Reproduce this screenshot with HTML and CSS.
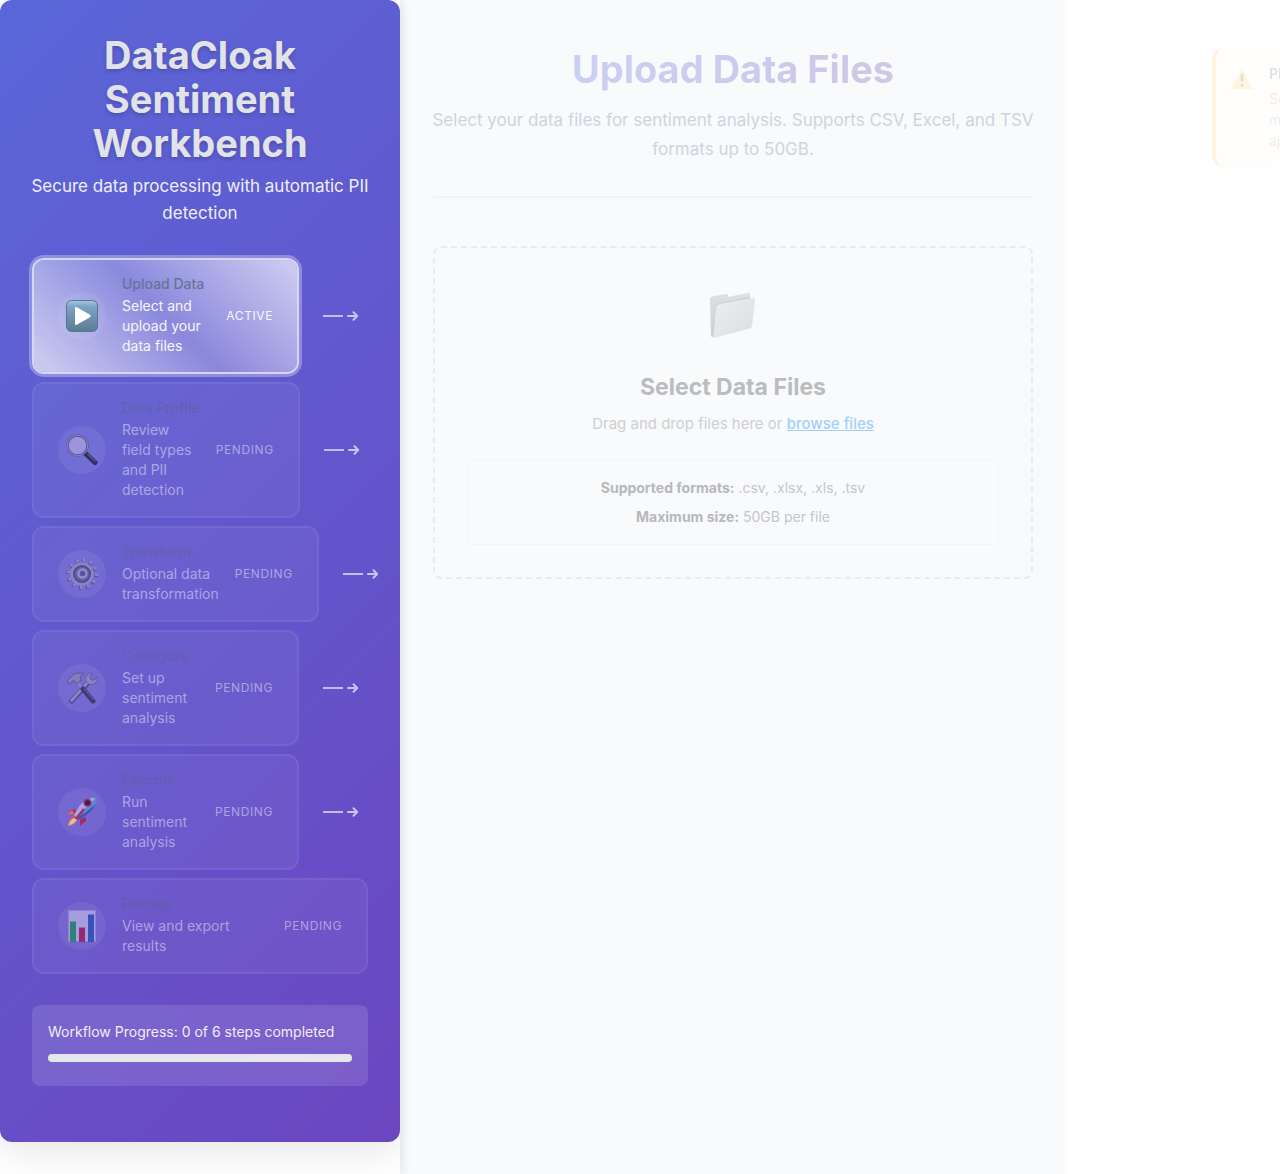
FILE: index.html
```html
<!DOCTYPE html>
<html lang="en">
<head>
<meta charset="utf-8">
<meta name="viewport" content="width=device-width, initial-scale=1">
<title>DataCloak Sentiment Workbench</title>
<link rel="stylesheet" href="styles.css">
</head>
<body>
<div class="layout">
  <aside class="sidebar">
    <div class="workflow">
      <header class="brand">
        <h1 class="brand-title">DataCloak Sentiment Workbench</h1>
        <p class="brand-subtitle">Secure data processing with automatic PII detection</p>
      </header>

      <ol class="steps">
        <li class="step-row">
          <button type="button" class="step step-active" aria-current="step">
            <span class="step-icon">
              <svg viewBox="0 0 32 32" width="32" height="32" aria-hidden="true">
                <defs><linearGradient id="play" x1="0" y1="0" x2="0" y2="1"><stop offset="0" stop-color="#a3c8e0"/><stop offset=".2" stop-color="#7ba3c4"/><stop offset="1" stop-color="#5b7b94"/></linearGradient></defs>
                <rect x=".5" y=".5" width="31" height="31" rx="5" fill="url(#play)" stroke="#56758f"/>
                <path d="M9 8.200Q9 6.300 10.800 7.200L24 14.800Q25.500 16 24 17.200L10.800 24.800Q9 25.700 9 23.800Z" fill="#fff"/>
              </svg>
            </span>
            <span class="step-text"><span class="step-title">Upload Data</span><span class="step-desc">Select and upload your data files</span></span>
            <span class="step-status">Active</span>
          </button>
          <span class="connector" aria-hidden="true"><span class="connector-line"></span><svg class="connector-arrow" viewBox="0 0 12 12" width="12" height="12"><path d="M1 6H10M6.500 2.300L10.200 6L6.500 9.700"/></svg></span>
        </li>
        <li class="step-row">
          <button type="button" class="step">
            <span class="step-icon">
              <svg viewBox="0 0 32 32" width="32" height="32" aria-hidden="true">
                <path d="M20 20L29 28.500" stroke="#312e61" stroke-width="5" stroke-linecap="round"/>
                <path d="M22 20.500L29 27" stroke="#5a5790" stroke-width="1.500" stroke-linecap="round"/>
                <circle cx="11.500" cy="11.500" r="10" fill="#9c94dc" stroke="#58579b" stroke-width="2.500"/>
                <circle cx="11.500" cy="11.500" r="10.300" fill="none" stroke="#928cc9" stroke-width=".9"/>
              </svg>
            </span>
            <span class="step-text"><span class="step-title">Data Profile</span><span class="step-desc">Review field types and PII detection</span></span>
            <span class="step-status">Pending</span>
          </button>
          <span class="connector" aria-hidden="true"><span class="connector-line"></span><svg class="connector-arrow" viewBox="0 0 12 12" width="12" height="12"><path d="M1 6H10M6.500 2.300L10.200 6L6.500 9.700"/></svg></span>
        </li>
        <li class="step-row">
          <button type="button" class="step">
            <span class="step-icon">
              <svg viewBox="0 0 32 32" width="32" height="32" aria-hidden="true">
                <circle cx="16" cy="16" r="13.800" fill="none" stroke="#504a8d" stroke-width="4" stroke-dasharray="3 4.220"/>
                <circle cx="16.500" cy="15.500" r="13.800" fill="none" stroke="#8a85c4" stroke-width="3.500" stroke-dasharray="2.600 4.620"/>
                <circle cx="16" cy="16" r="10.300" fill="#6560a3" stroke="#8883c2" stroke-width="3"/>
                <circle cx="16" cy="16" r="8" fill="none" stroke="#4c4884" stroke-width="1.500"/>
                <circle cx="16.500" cy="15.500" r="4" fill="#5751a0" stroke="#918bcb" stroke-width="2.500"/>
              </svg>
            </span>
            <span class="step-text"><span class="step-title">Transform</span><span class="step-desc">Optional data transformation</span></span>
            <span class="step-status">Pending</span>
          </button>
          <span class="connector" aria-hidden="true"><span class="connector-line"></span><svg class="connector-arrow" viewBox="0 0 12 12" width="12" height="12"><path d="M1 6H10M6.500 2.300L10.200 6L6.500 9.700"/></svg></span>
        </li>
        <li class="step-row">
          <button type="button" class="step">
            <span class="step-icon">
              <svg viewBox="0 0 32 32" width="32" height="32" aria-hidden="true">
                <path d="M21 12L5.500 29" stroke="#534a93" stroke-width="5" stroke-linecap="round"/>
                <path d="M21 11L5.500 28.500" stroke="#8c84c8" stroke-width="2.800" stroke-linecap="round"/>
                <path d="M20 9.500C18.500 4.500 22 .800 26.500 1L23.500 4.500L25 8L28.500 8L30.800 4.500C32.500 9 28.500 13.500 23.500 12.500Z" fill="#8a84c5" stroke="#5c559b" stroke-width=".8"/>
                <path d="M11 10L18 18" stroke="#8781bd" stroke-width="2.500"/>
                <path d="M17 17L27 29" stroke="#403877" stroke-width="5" stroke-linecap="round"/>
                <path d="M18 16.500L28 28" stroke="#5c5398" stroke-width="1.500"/>
                <path d="M1 9L5 5C8 1 12 .5 18 1.500L14 4.500L15 8L11 12L8 8.500L6.500 9L4 12.500Z" fill="#837dbd" stroke="#534d8c" stroke-width=".8"/>
              </svg>
            </span>
            <span class="step-text"><span class="step-title">Configure</span><span class="step-desc">Set up sentiment analysis</span></span>
            <span class="step-status">Pending</span>
          </button>
          <span class="connector" aria-hidden="true"><span class="connector-line"></span><svg class="connector-arrow" viewBox="0 0 12 12" width="12" height="12"><path d="M1 6H10M6.500 2.300L10.200 6L6.500 9.700"/></svg></span>
        </li>
        <li class="step-row">
          <button type="button" class="step">
            <span class="step-icon">
              <svg viewBox="0 0 32 32" width="32" height="32" aria-hidden="true">
                <defs><linearGradient id="flame" x1="1" y1="0" x2="0" y2="1"><stop offset="0" stop-color="#b7336c"/><stop offset="1" stop-color="#dd9884"/></linearGradient></defs>
                <path d="M10 13L5 14L1 19L10 18Z" fill="#b32f65"/><path d="M20 21V25L14 30L14 23Z" fill="#a52a68"/>
                <path d="M8 18L1 19L6 14Z" fill="#d17570"/>
                <path d="M9 19Q3 21 2 30Q9 29 13 23Z" fill="url(#flame)"/><path d="M8 22Q4 24 3 29Q8 28 11 24Z" fill="#e4bf99"/>
                <path d="M31 1Q21 .5 14 9L8 19L13 24L23 18Q31 11 31 1Z" fill="#6185d6"/>
                <path d="M31 1Q21 2 14 9L8 19L10 21Z" fill="#a5a5e0"/>
                <path d="M30 8Q27 14 22 18L13 24L11 22L20 16Z" fill="#3e57b4"/>
                <path d="M27 1.200L31 1L30.700 5Z" fill="#5c84cf"/>
                <circle cx="21.500" cy="6.800" r="3.300" fill="#2d245f" stroke="#a92c69" stroke-width="1.500"/>
                <path d="M18 13L10 23" stroke="#a62c68" stroke-width="2.500"/>
              </svg>
            </span>
            <span class="step-text"><span class="step-title">Execute</span><span class="step-desc">Run sentiment analysis</span></span>
            <span class="step-status">Pending</span>
          </button>
          <span class="connector" aria-hidden="true"><span class="connector-line"></span><svg class="connector-arrow" viewBox="0 0 12 12" width="12" height="12"><path d="M1 6H10M6.500 2.300L10.200 6L6.500 9.700"/></svg></span>
        </li>
        <li class="step-row">
          <button type="button" class="step">
            <span class="step-icon">
              <svg viewBox="0 0 32 32" width="32" height="32" aria-hidden="true">
                <rect x="2" width="28" height="32" fill="#a49cdf"/>
                <path d="M11 0V32M20 0V32M2 8H30M2 16H30M2 24H30" stroke="#aaa3e4" stroke-width=".6"/>
                <rect x="2.500" y=".5" width="27" height="31" fill="none" stroke="#8b83cf"/>
                <rect x="4" y="11.500" width="6" height="20.500" fill="#338078"/>
                <rect x="13" y="17.500" width="6" height="14.500" fill="#952a6e"/>
                <rect x="22" y="4.500" width="6" height="27.500" fill="#3653bd"/>
              </svg>
            </span>
            <span class="step-text"><span class="step-title">Results</span><span class="step-desc">View and export results</span></span>
            <span class="step-status">Pending</span>
          </button>
        </li>
      </ol>

      <section class="progress-card">
        <label class="progress-label" for="workflow-progress">Workflow Progress: 0 of 6 steps completed</label>
        <progress class="progress-bar" id="workflow-progress" value="0" max="6"></progress>
      </section>
    </div>
  </aside>

  <main class="content">
    <header class="page-header">
      <h2 class="page-title">Upload Data Files</h2>
      <p class="page-subtitle">Select your data files for sentiment analysis. Supports CSV, Excel, and TSV formats up to 50GB.</p>
    </header>

    <section class="dropzone">
      <svg class="folder" viewBox="0 0 48 48" width="48" height="48" aria-hidden="true">
        <defs>
          <linearGradient id="folder-front" x1="0" y1="0" x2="1" y2="1"><stop offset="0" stop-color="#eceff1"/><stop offset="1" stop-color="#dadee1"/></linearGradient>
          <linearGradient id="folder-back" x1="0" y1="0" x2="0" y2="1"><stop offset="0" stop-color="#dce1e5"/><stop offset="1" stop-color="#c8ced3"/></linearGradient>
        </defs>
        <path d="M1 8Q1 6 3 5.500L17 3Q19 2.700 19 4V6L38 2Q41 1.300 41 3V9L7 44L4 46.500Q2 46 2 44Z" fill="url(#folder-back)"/>
        <path d="M4 44L7 15Q7 13 9 12.700L38 6.500L41 6V10L9 18L6 45Z" fill="#c7cdd2"/>
        <path d="M7.500 16Q8 14 10 13.500L44 7Q46 6.700 46 8.500L43 35Q42.700 36.800 41 37.300L6 46.800Q4.500 47 4.800 45Z" fill="url(#folder-front)" stroke="#e9edf0" stroke-width=".6"/>
      </svg>
      <h3 class="dropzone-title">Select Data Files</h3>
      <p class="dropzone-hint">Drag and drop files here or <a class="browse" href="#browse">browse files</a></p>
      <div class="limits">
        <p><strong>Supported formats:</strong> .csv, .xlsx, .xls, .tsv</p>
        <p><strong>Maximum size:</strong> 50GB per file</p>
      </div>
    </section>
  </main>
</div>

<div class="toast" role="status">
  <svg class="toast-icon" viewBox="0 0 22 20" width="22" height="20" aria-hidden="true"><path d="M11 0L22 20H0Z" fill="#fff5db"/><path d="M11 5V13" stroke="#e0dfdb" stroke-width="2.500"/><circle cx="11" cy="16.500" r="1.400" fill="#e0dfdb"/></svg>
  <div class="toast-body"><strong class="toast-title">PI</strong><span>Se</span><span>m</span><span>ap</span></div>
</div>
</body>
</html>
```
FILE: styles.css
```css
* { box-sizing: border-box; }

body {
  margin: 0;
  font-family: Inter, "Liberation Sans", sans-serif;
  background: #fff;
}

h1, h2, h3, p, ol { margin: 0; padding: 0; }

.layout {
  display: grid;
  grid-template-columns: 400px minmax(0, 1fr);
  min-height: 100vh;
}

/* Sidebar */
.sidebar {
  position: relative;
  background: #fff;
  box-shadow: 2px 0 10px rgba(0, 0, 0, 0.1);
}

.workflow {
  padding: 33px 32px 56px;
  border-radius: 12px;
  background: linear-gradient(135deg, #5a67d8 0%, #6b46c1 100%);
  box-shadow: 0 10px 40px rgba(0, 0, 0, 0.1);
  clip-path: inset(0 0 -80px 0);
  color: #fff;
}

.brand { margin: 0 -8px 31px; text-align: center; }

.brand-title {
  margin: 0 8px 8px;
  font-size: 38px;
  line-height: 44px;
  font-weight: 700;
  color: #e1e3e9;
  text-shadow: 0 2px 4px rgba(0, 0, 0, 0.2);
}

.brand-subtitle {
  font-size: 17px;
  line-height: 27px;
  color: #efeffb;
}

.steps {
  display: flex;
  flex-direction: column;
  gap: 8px;
  margin-bottom: 31px;
  list-style: none;
}

.step-row { display: flex; align-items: center; }

.step {
  flex: 1;
  display: flex;
  align-items: center;
  gap: 16px;
  padding: 16px 24px;
  border: 2px solid rgba(255, 255, 255, 0.06);
  border-radius: 12px;
  background: rgba(255, 255, 255, 0.05);
  font: inherit;
  text-align: left;
  color: rgba(255, 255, 255, 0.45);
}

.step-active {
  border-color: rgba(255, 255, 255, 0.75);
  background: linear-gradient(45deg, rgba(255, 255, 255, 0.7), rgba(255, 255, 255, 0.27) 50%, rgba(255, 255, 255, 0.7)) padding-box;
  box-shadow: 0 0 0 3px rgba(255, 255, 255, 0.3);
  color: #f7f6fd;
}

.step-icon {
  flex: none;
  display: grid;
  place-items: center;
  width: 48px;
  height: 48px;
  border-radius: 50%;
  background: rgba(255, 255, 255, 0.07);
}

.step-text {
  flex: 1;
  display: flex;
  flex-direction: column;
  gap: 4px;
  font-size: 14px;
}

.step-title {
  line-height: 16px;
  font-weight: 500;
  white-space: nowrap;
  color: rgba(90, 95, 130, 0.4);
}

.step-active .step-title { color: #68739a; }

.step-desc { line-height: 20px; }

.step-status {
  font-size: 12px;
  line-height: 16px;
  letter-spacing: 0.05em;
  text-transform: uppercase;
}

.connector {
  flex: none;
  display: flex;
  align-items: center;
  gap: 4px;
  margin: 0 9px 0 24px;
}

.connector-line { width: 20px; height: 2px; background: #c3bfea; }

.connector-arrow {
  fill: none;
  stroke: #c9c5ee;
  stroke-width: 2;
  stroke-linecap: round;
  stroke-linejoin: round;
}

.progress-card {
  padding: 16px 16px 24px;
  border-radius: 8px;
  background: rgba(255, 255, 255, 0.12);
}

.progress-label {
  display: block;
  margin-bottom: 12px;
  font-size: 14px;
  line-height: 21px;
  color: #f0edf9;
}

.progress-bar {
  display: block;
  width: 100%;
  height: 8px;
  appearance: none;
  border: 0;
  border-radius: 4px;
  overflow: hidden;
  background: #e5e7eb;
}

.progress-bar::-webkit-progress-bar { background: #e5e7eb; }
.progress-bar::-webkit-progress-value { background: #48bb78; }

/* Main area */
.content {
  margin-right: 215px;
  padding: 47px 32px 32px 33px;
  background: #f8fafc;
  text-align: center;
}

.page-header {
  margin-bottom: 48px;
  padding-bottom: 32px;
  border-bottom: 2px solid #f0f3f8;
}

.page-title {
  width: fit-content;
  margin: 0 auto 15px;
  font-size: 38px;
  line-height: 44px;
  font-weight: 700;
  background: linear-gradient(135deg, #cad0f5, #d0c6e4);
  background-clip: text;
  color: transparent;
}

.page-subtitle {
  margin: 0 -8px;
  font-size: 17px;
  line-height: 29px;
  color: #ced4de;
}

.dropzone {
  padding: 40px 32px 32px;
  border: 2px dashed #e9ebee;
  border-radius: 8px;
}

.folder { display: block; margin: 3px auto 32px; }

.dropzone-title {
  margin-bottom: 8px;
  font-size: 23px;
  line-height: 32px;
  font-weight: 700;
  color: #bbbcbe;
}

.dropzone-hint {
  margin-bottom: 22px;
  font-size: 15px;
  line-height: 26px;
  color: #cecfd1;
}

.browse { color: #a5cffb; font-weight: 500; }

.limits {
  padding: 13px 16px;
  border: 1px solid #f3f5f8;
  border-radius: 4px;
  font-size: 14px;
  line-height: 29px;
  color: #c5c6c9;
}

.limits strong { font-weight: 700; color: #b7b8bb; }

.toast {
  position: fixed;
  top: 48px;
  right: 0;
  display: flex;
  gap: 16px;
  width: 68px;
  height: 119px;
  padding: 15px 0 16px 15px;
  overflow: hidden;
  border-left: 4px solid #fff2e0;
  border-radius: 12px 0 0 12px;
  background: #fffefd;
  box-shadow: 0 4px 12px rgba(0, 0, 0, 0.01);
}

.toast-icon { flex: none; margin-top: 6px; }

.toast-body {
  display: flex;
  flex-direction: column;
  font-size: 14px;
  line-height: 21px;
  color: #ededee;
}

.toast-title { margin-bottom: 4px; font-weight: 600; color: #e2e2e4; }
```
